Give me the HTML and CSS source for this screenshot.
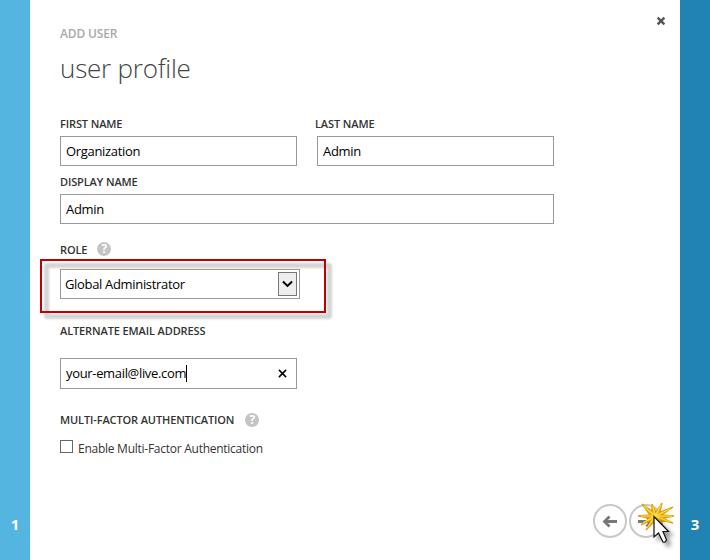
FILE: index.html
```html
<!DOCTYPE html>
<html lang="en">
<head>
<meta charset="utf-8">
<title>Add user</title>
<link rel="stylesheet" href="styles.css">
</head>
<body>
<div class="wizard">
  <aside class="step step-prev"><span>1</span></aside>
  <main class="panel">
    <svg class="close" viewBox="0 0 10 10"><path d="M1.6 1.6l6.8 6.8M8.4 1.6l-6.8 6.8"/></svg>
    <div class="eyebrow">ADD USER</div>
    <h1>user profile</h1>
    <div class="names">
      <div class="field first"><label class="label">FIRST NAME</label><div class="input">Organization</div></div>
      <div class="field last"><label class="label">LAST NAME</label><div class="input">Admin</div></div>
    </div>
    <div class="field display"><label class="label">DISPLAY NAME</label><div class="input">Admin</div></div>
    <div class="field role">
      <label class="label role-label">ROLE<span class="help">?</span></label>
      <div class="select"><span>Global Administrator</span>
        <i class="drop"><svg viewBox="0 0 12 8"><path d="M1 1.2l5 4.9 5-4.9"/></svg></i>
      </div>
      <div class="highlight"></div>
    </div>
    <div class="field email"><label class="label">ALTERNATE EMAIL ADDRESS</label>
      <div class="input"><span>your-email@live.com</span><i class="caret"></i>
        <svg class="clear" viewBox="0 0 10 10"><path d="M1 1l8 8M9 1l-8 8"/></svg>
      </div>
    </div>
    <div class="label mfa">MULTI-FACTOR AUTHENTICATION<span class="help">?</span></div>
    <div class="check"><i class="box"></i><span>Enable Multi-Factor Authentication</span></div>
    <div class="nav">
      <svg viewBox="0 0 34 34"><circle cx="17" cy="17" r="16"/><path d="M24 17.500H12M16.500 12.500l-5 5 5 5"/></svg>
      <svg viewBox="0 0 34 34"><circle cx="17" cy="17" r="16"/><path d="M9 17.500H22M17.500 12.500l5 5-5 5"/></svg>
    </div>
    <svg class="pointer" viewBox="0 0 42 52">
      <path class="burst" d="M4 6L14 13 14 6 18 14 24 5 22 14 35 9 24 17 36 18 25 20 35 25 23 22 25 30 18 22 8 32 14 22 3 27 12 20 0 18 12 17Z"/>
      <path class="rays" d="M17 18L6 8M17 18l-2-10M17 18l6-11M17 18l15-7M17 18h17M17 18l15 6M17 18l-8 12M17 18l-12 7M17 18H3"/>
      <path class="arrow" d="M16 18.500v20.500l4.500-4 4.500 9q2 1 3.500-2l-3.500-8.500h5.500z"/>
    </svg>
  </main>
  <aside class="step step-next"><span>3</span></aside>
</div>
</body>
</html>
```
FILE: styles.css
```css
*, *::after { box-sizing: border-box; }
body { margin: 0; background: #fff; font-family: "Open Sans", "Noto Sans", sans-serif; }
.wizard { display: grid; grid-template-columns: 30px 650px 30px; width: 710px; height: 560px; overflow: hidden; }
.step { display: flex; align-items: flex-end; justify-content: center; padding-bottom: 26px; color: #fff; font-weight: 700; font-size: 15px; line-height: 20px; }
.step-prev { background: #54b5e0; }
.step-next { background: #2083b1; }
.panel { position: relative; padding: 24px 30px 0; }
.panel svg { display: block; fill: none; }
.close { position: absolute; left: 626px; top: 16px; width: 10px; height: 10px; stroke: #555; stroke-width: 2.4; }
.eyebrow { height: 20px; line-height: 20px; font-size: 12px; font-weight: 600; color: #aaa; letter-spacing: -0.15px; white-space: nowrap; }
h1 { margin: 4px 0 0; height: 40px; line-height: 40px; font-size: 26px; font-weight: 300; color: #444; letter-spacing: -0.22px; white-space: nowrap; }
.label { display: flex; align-items: center; height: 16px; font-size: 11px; font-weight: 600; color: #333; letter-spacing: -0.12px; white-space: nowrap; }
.names { display: flex; gap: 18px; margin-top: 27px; }
.first { width: 237px; }
.last { width: 239px; }
.last .input { margin-left: 2px; }
.input, .select { display: flex; align-items: center; height: 30px; border: 1px solid #999; padding-left: 5px; font-size: 13px; color: #000; letter-spacing: -0.33px; white-space: nowrap; }
.field .input { margin-top: 5px; }
.display { width: 494px; margin-top: 7px; }
.role { position: relative; width: 240px; margin-top: 16px; }
.role-label { height: 18px; }
.help { display: flex; align-items: center; justify-content: center; width: 14px; height: 14px; margin-left: 10px; border-radius: 50%; background: #c4c4c4; color: #fff; font-size: 12px; line-height: 14px; font-weight: 700; letter-spacing: 0; }
.select { position: relative; margin-top: 11px; padding: 0 2px 0 4px; justify-content: space-between; z-index: 1; }
.drop { width: 19px; height: 24px; border: 1px solid #777; background: #eee; padding: 7px 3px; }
.drop svg { width: 11px; height: 8px; stroke: #000; stroke-width: 2.2; }
.highlight { position: absolute; left: -20px; top: 19px; width: 286px; height: 54px; border: 2px solid #c00000; }
.highlight::after { content: ""; position: absolute; z-index: -1; left: 2px; top: 2px; width: 288px; height: 56px; border: 5px solid rgba(0,0,0,.17); border-radius: 3px; filter: blur(1.2px); }
.email { width: 237px; margin-top: 23px; }
.email .input { margin-top: 20px; height: 31px; padding-bottom: 1px; }
.caret { width: 1px; height: 17px; background: #000; }
.clear { width: 9px; height: 9px; margin-left: auto; margin-right: 9px; stroke: #000; stroke-width: 1.7; }
.mfa { margin-top: 22px; }
.mfa .help { margin-left: 11px; margin-top: 1px; }
.check { display: flex; align-items: center; height: 18px; margin-top: 12px; font-size: 12px; color: #333; white-space: nowrap; letter-spacing: -0.26px; }
.box { width: 13px; height: 13px; margin: -3px 5px 0 0; border: 1px solid #666; }
.nav { position: absolute; left: 563px; top: 504px; display: flex; gap: 2px; }
.nav svg { width: 34px; height: 34px; stroke: #777; stroke-width: 2.8; }
.nav circle { stroke: #c8c8c8; stroke-width: 2; }
.panel .pointer { position: absolute; left: 608px; top: 498px; width: 42px; height: 52px; overflow: visible; }
.pointer .burst { fill: #eeb51c; stroke: #dda010; stroke-width: 1.3; }
.pointer .rays { stroke: #ffdc45; stroke-width: 1.2; }
.pointer .arrow { fill: #fff; stroke: #111; stroke-width: 1.2; filter: drop-shadow(4px 4px 2px rgba(0,0,0,.4)); }
```
